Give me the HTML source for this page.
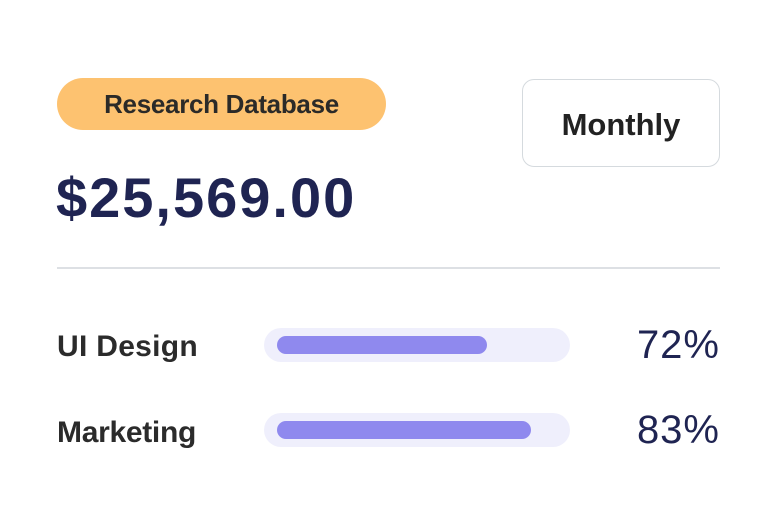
<!DOCTYPE html>
<html><head><style>
body{margin:0;width:781px;height:527px;background:#fff;font-family:"Liberation Sans",sans-serif;position:relative;overflow:hidden}
.a{position:absolute}
.pill{left:57px;top:78px;width:329px;height:52px;border-radius:26px;background:#fdc270;color:#2b2a28;font-size:26px;font-weight:bold;letter-spacing:-0.3px;line-height:52px;text-align:center}
.mon{left:522px;top:79px;width:196px;height:86px;border:1.5px solid #d5dade;border-radius:12px;font-size:31px;font-weight:bold;color:#222;text-align:center;line-height:90px;letter-spacing:0px}
.price{left:56px;top:166px;font-size:56px;font-weight:bold;color:#1f2452;letter-spacing:2px;line-height:64px}
.hr{left:57px;top:267px;width:663px;height:2px;background:#dde0e4}
.lbl{left:57px;font-size:30px;font-weight:bold;color:#2b2b2b;letter-spacing:0.3px;line-height:40px}
.trk{left:264px;width:306px;height:34px;border-radius:17px;background:#efeffc}
.bar{left:277px;height:18px;border-radius:9px;background:#8f89ee}
.pct{right:61px;font-size:40px;color:#1f2452;line-height:44px;letter-spacing:1px}
</style></head><body>
<div class="a pill">Research Database</div>
<div class="a mon">Monthly</div>
<div class="a price">$25,569.00</div>
<div class="a hr"></div>
<div class="a lbl" style="top:327px">UI Design</div>
<div class="a trk" style="top:328px"></div>
<div class="a bar" style="top:336px;width:210px"></div>
<div class="a pct" style="top:323px">72%</div>
<div class="a lbl" style="top:413px;letter-spacing:-0.3px">Marketing</div>
<div class="a trk" style="top:413px"></div>
<div class="a bar" style="top:421px;width:254px"></div>
<div class="a pct" style="top:408px">83%</div>
</body></html>
